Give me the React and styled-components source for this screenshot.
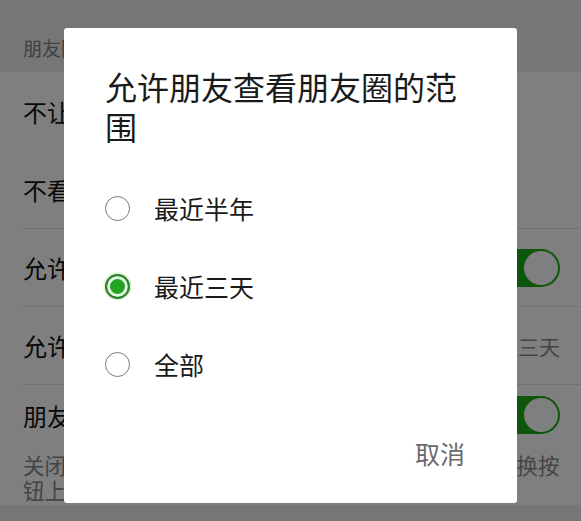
import styled, { createGlobalStyle } from 'styled-components'

const Global = createGlobalStyle`
  html, body {
    margin: 0;
    padding: 0;
    background: #ededed;
    font-family: 'Noto Sans CJK SC', 'Noto Sans', sans-serif;
    overflow: hidden;
  }
`

const Page = styled.div`
  width: 581px;
  height: 521px;
  background: #ededed;
  display: flex;
  flex-direction: column;
`

const SectionHead = styled.div`
  height: 72px;
  box-sizing: border-box;
  padding: 34px 0 0 23px;
  font-size: 19px;
  line-height: 28px;
  color: #808080;
`

const List = styled.div`
  background: #fff;
  padding-left: 23px;
`

const Row = styled.div`
  height: 78px;
  display: flex;
  align-items: center;
  justify-content: space-between;
  padding-right: 21px;
  border-top: ${p => (p.plain ? 'none' : '1px solid #e3e3e3')};
  box-sizing: border-box;
  font-size: 24px;
  color: #111;
`

const Cell = styled.div`
  border-top: 1px solid #e3e3e3;
  padding: 11px 21px 3px 0;
`

const CellHead = styled.div`
  display: flex;
  align-items: center;
  justify-content: space-between;
  height: 38px;
  font-size: 24px;
  color: #111;
`

const Value = styled.span`
  font-size: 21px;
  color: #888;
`

const Toggle = styled.span`
  width: 70px;
  height: 38px;
  border-radius: 19px;
  background: #1aad19;
  display: flex;
  justify-content: flex-end;
  align-items: center;
  padding: 2px;
  box-sizing: border-box;
  flex: none;

  &::after {
    content: '';
    width: 34px;
    height: 34px;
    border-radius: 50%;
    background: #fff;
  }
`

const Desc = styled.div`
  margin-top: 18px;
  font-size: 21.5px;
  line-height: 25px;
  color: #888;
`

const Overlay = styled.div`
  position: fixed;
  inset: 0;
  background: rgba(0, 0, 0, 0.5);
  display: flex;
  align-items: flex-start;
`

const Dialog = styled.div`
  margin: 28px 0 0 64px;
  width: 453px;
  height: 475px;
  background: #fff;
  border-radius: 3px;
  box-sizing: border-box;
  padding: 38px 41px 0 41px;
  display: flex;
  flex-direction: column;
`

const Title = styled.h2`
  margin: 0;
  font-size: 32px;
  line-height: 40px;
  font-weight: 400;
  color: #1a1a1a;
`

const Options = styled.div`
  margin-top: 23px;
  display: flex;
  flex-direction: column;
`

const Option = styled.label`
  height: 78px;
  display: flex;
  align-items: center;
  gap: 24px;
  font-size: 25px;
  color: #1a1a1a;
`

const Radio = styled.span`
  width: 25px;
  height: 25px;
  border-radius: 50%;
  box-sizing: border-box;
  flex: none;
  border: ${p => (p.checked ? '2px solid #2f7d31' : '1.5px solid #7a7a7a')};
  background: ${p => (p.checked ? '#22a422' : '#fff')};
  box-shadow: ${p =>
    p.checked ? 'inset 0 0 0 3px #e4f6e2, 0 0 0 1.5px #d8f5d0' : 'none'};
`

const Actions = styled.div`
  margin-top: auto;
  margin-bottom: 35px;
  display: flex;
  justify-content: flex-end;
  margin-right: 11px;
`

const Cancel = styled.button`
  border: none;
  background: none;
  padding: 0;
  font-family: inherit;
  font-size: 25px;
  line-height: 30px;
  color: #6b6b6b;
`

const options = [
  { label: '最近半年', checked: false },
  { label: '最近三天', checked: true },
  { label: '全部', checked: false },
]

export default function App() {
  return (
    <>
      <Global />
      <Page>
        <SectionHead>朋友圈</SectionHead>
        <List>
          <Row plain>不让他（她）看</Row>
          <Row plain>不看他（她）</Row>
          <Row>允许陌生人查看十条朋友圈<Toggle /></Row>
          <Row>允许朋友查看朋友圈的范围<Value>最近三天</Value></Row>
          <Cell>
            <CellHead>朋友圈更新提醒<Toggle /></CellHead>
            <Desc>关闭后，有朋友发表朋友圈时，界面下方的"发现"切换按钮上不再出现红点提示。</Desc>
          </Cell>
        </List>
      </Page>
      <Overlay>
        <Dialog>
          <Title>允许朋友查看朋友圈的范围</Title>
          <Options>
            {options.map(o => (
              <Option key={o.label}>
                <Radio checked={o.checked} />
                {o.label}
              </Option>
            ))}
          </Options>
          <Actions>
            <Cancel>取消</Cancel>
          </Actions>
        </Dialog>
      </Overlay>
    </>
  )
}
